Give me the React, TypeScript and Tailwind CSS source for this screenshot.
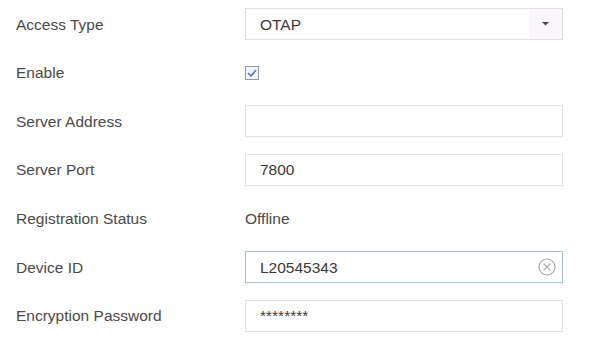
import React from 'react';

const font = { fontFamily: '"Liberation Sans", Arial, sans-serif' };

function Row({ label, children }: { label: string; children: React.ReactNode }) {
  return (
    <div className="flex h-[48.6px] items-center">
      <div className="w-[245px] shrink-0 pl-4 text-[15.5px] text-[#4a4a4a]">{label}</div>
      <div className="flex-1">{children}</div>
    </div>
  );
}

function Field({ value, focused = false, clear = false }: { value?: string; focused?: boolean; clear?: boolean }) {
  return (
    <div
      className={`flex h-8 w-[318px] items-center border bg-white pl-[14px] pr-1 text-[15.5px] text-[#3a3a3a] ${
        focused ? 'border-[#a8bde3]' : 'border-[#e3dfe8]'
      }`}
    >
      <span className="flex-1">{value}</span>
      {clear && (
        <svg width="20" height="20" viewBox="0 0 20 20" className="mr-[1px]">
          <circle cx="10" cy="10" r="8" fill="none" stroke="#ababab" strokeWidth="1.2" />
          <path d="M6.6 6.6 L13.4 13.4 M13.4 6.6 L6.6 13.4" stroke="#ababab" strokeWidth="1.2" />
        </svg>
      )}
    </div>
  );
}

export default function App() {
  return (
    <div className="h-[354px] w-[597px] bg-white" style={font}>
      <Row label="Access Type">
        <div className="flex h-8 w-[318px] items-stretch border border-[#e3dfe8] bg-white text-[15.5px] text-[#3a3a3a]">
          <span className="flex flex-1 items-center pl-[14px]">OTAP</span>
          <span className="flex w-[33px] items-center justify-center bg-[#f9f7fb]">
            <svg width="7" height="4" viewBox="0 0 7 4">
              <path d="M0 0 L7 0 L3.5 3.5 Z" fill="#444" />
            </svg>
          </span>
        </div>
      </Row>
      <Row label="Enable">
        <div className="flex h-[14px] w-[14px] items-center justify-center border border-[#8f9ab5] bg-[#f2f5fb]">
          <svg width="10" height="8" viewBox="0 0 10 8">
            <path d="M1 4 L4 7 L9 1" fill="none" stroke="#4f74c7" strokeWidth="1.5" />
          </svg>
        </div>
      </Row>
      <Row label="Server Address">
        <Field />
      </Row>
      <Row label="Server Port">
        <Field value="7800" />
      </Row>
      <Row label="Registration Status">
        <span className="text-[15.5px] text-[#4a4a4a]">Offline</span>
      </Row>
      <Row label="Device ID">
        <Field value="L20545343" focused clear />
      </Row>
      <Row label="Encryption Password">
        <Field value="********" />
      </Row>
    </div>
  );
}
